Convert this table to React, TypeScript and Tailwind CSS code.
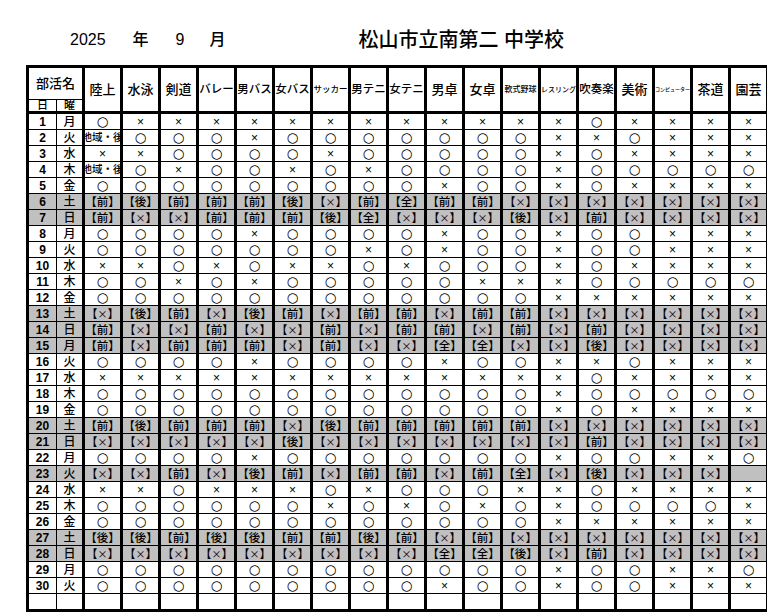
const clubs: { name: string; cls: string }[] = [
  { name: "陸上", cls: "text-[13px]" },
  { name: "水泳", cls: "text-[13px]" },
  { name: "剣道", cls: "text-[13px]" },
  { name: "バレー", cls: "text-[11.5px]" },
  { name: "男バス", cls: "text-[11.5px]" },
  { name: "女バス", cls: "text-[11.5px]" },
  { name: "サッカー", cls: "text-[8.5px]" },
  { name: "男テニ", cls: "text-[11.5px]" },
  { name: "女テニ", cls: "text-[11.5px]" },
  { name: "男卓", cls: "text-[13px]" },
  { name: "女卓", cls: "text-[13px]" },
  { name: "軟式野球", cls: "text-[8px]" },
  { name: "レスリング", cls: "text-[7px]" },
  { name: "吹奏楽", cls: "text-[11.5px]" },
  { name: "美術", cls: "text-[13px]" },
  { name: "コンピューター", cls: "text-[5px]" },
  { name: "茶道", cls: "text-[13px]" },
  { name: "園芸", cls: "text-[13px]" },
];

// o = ○, x = ×, X = 【×】, 前/後/全 = 【前】 etc, 地 = 地域・後, _ = empty
const rows: string[] = [
  "o x x x x x x x x x x x x o x x x x",
  "地 o o o x o o o o o o o x x o x x x",
  "x x o o o o x o o o o o x o x x x x",
  "地 o x o o x o x o o o o x o o o o o",
  "o o o o o o o o o x o o x o x x x x",
  "前 後 前 前 前 後 X 前 全 前 前 X X X X X X X",
  "前 X X 前 前 前 後 全 X X X 後 X 前 X X X X",
  "o o o o x o o o o x o o x o o x x x",
  "o o o o o o o x o x o o x o o x x x",
  "x x o x o x x o x o o o x o x x x x",
  "o o x o x o o o o o x x x o o o o o",
  "o o o o o o o o o o o o x x x x x x",
  "X 後 前 X 後 前 X 前 前 X 前 前 X X X X X X",
  "前 X X 前 X X 前 X 前 前 X 前 X 前 X X X X",
  "前 X 前 前 前 X 前 X X 全 全 X X 後 X X X X",
  "o o o o x o o o o x o o x x o x x x",
  "x x x x x x x x x x x x x o x x x x",
  "o o o o o o o o o o o o x o o o o o",
  "o o o o o o o o o o o o x o x x x x",
  "前 後 前 前 前 X 後 前 前 前 前 前 X X X X X X",
  "X X X X X 後 X X X X X X X 前 X X X X",
  "o o o o x o o o o o o o x o o x x o",
  "X X 前 X 後 前 X 前 前 X 前 全 X 後 X X X _",
  "x x o x x x o x o o o x x o x x x x",
  "o o o o o o x o x o x o x o o o o x",
  "o o o o o o o o o o o o x x x x x x",
  "後 後 前 後 後 前 前 後 前 X 前 X X X X X X X",
  "X X X X X X X X X 全 全 後 X 前 X X X X",
  "o o o o o o o o o o o o x o o x x o",
  "o o o o o o o o o x o o x o o x x x",
];

const weekdays = ["月", "火", "水", "木", "金", "土", "日"];
const cjk = { fontFamily: '"Noto Sans CJK JP", sans-serif' };
const dejavu = { fontFamily: '"DejaVu Sans", sans-serif' };

const Cell = ({ v }: { v: string }) => {
  if (v === "地")
    return (
      <div className="h-[15px] flex items-center justify-center overflow-hidden">
        <span className="text-[10.5px] leading-none font-medium whitespace-nowrap" style={cjk}>
          地域・後
        </span>
      </div>
    );
  let content: React.ReactNode = null;
  if (v === "o")
    content = (
      <span className="text-[13.5px] leading-none" style={dejavu}>
        ○
      </span>
    );
  else if (v === "x") content = <span className="text-[12px] leading-none">×</span>;
  else if (v === "X")
    content = (
      <span className="text-[11.5px] leading-none font-medium whitespace-nowrap" style={cjk}>
        【<span className="text-[10px] font-normal">×</span>】
      </span>
    );
  else if (v !== "_")
    content = (
      <span className="text-[11.5px] leading-none font-medium whitespace-nowrap" style={cjk}>
        【{v}】
      </span>
    );
  return <div className="h-[15px] flex items-center justify-center">{content}</div>;
};

export default function App() {
  return (
    <div
      className="w-[767px] h-[614px] overflow-hidden bg-white text-black"
      style={{ fontFamily: '"Liberation Sans", "Noto Sans CJK JP", sans-serif' }}
    >
      <div className="flex items-center h-[22px] mt-[29px] ml-[70px] font-medium">
        <span className="text-[16px]">2025</span>
        <span className="text-[16px] ml-[27px]">年</span>
        <span className="text-[16px] ml-[27px]">9</span>
        <span className="text-[16px] ml-[25px]">月</span>
        <span className="text-[20px] ml-[133px]">松山市立南第二 中学校</span>
      </div>

      <table className="mt-[14px] ml-[26px] w-[740px] table-fixed border-collapse border-[3px] border-black leading-none text-[11px]">
        <colgroup>
          <col className="w-[29px]" />
          <col className="w-[27px]" />
          {clubs.map((c) => (
            <col key={c.name} className="w-[38px]" />
          ))}
        </colgroup>
        <thead>
          <tr className="h-[33px]">
            <th colSpan={2} className="p-0 font-medium text-[13px] border-b border-r-[3px] border-black">
              部活名
            </th>
            {clubs.map((c) => (
              <th
                key={c.name}
                rowSpan={2}
                className={`p-0 font-medium whitespace-nowrap overflow-hidden border-x-[3px] border-b-[3px] border-black ${c.cls}`}
              >
                {c.name}
              </th>
            ))}
          </tr>
          <tr className="h-[13px]">
            <th className="p-0 font-medium text-[11px] border-r border-b-[3px] border-black">日</th>
            <th className="p-0 font-medium text-[11px] border-r-[3px] border-b-[3px] border-black">曜</th>
          </tr>
        </thead>
        <tbody>
          {rows.map((r, i) => {
            const cells = r.split(" ");
            const gray = cells[0] !== "o" && cells[0] !== "x" && cells[0] !== "地";
            return (
              <tr key={i} className={gray ? "bg-[#c0c0c0]" : "bg-white"}>
                <td className="p-0 border-r border-y border-black">
                  <div className="h-[15px] flex items-center justify-center text-[12px] font-bold">{i + 1}</div>
                </td>
                <td className="p-0 border-r-[3px] border-y border-black">
                  <div className="h-[15px] flex items-center justify-center text-[12px] font-medium">
                    {weekdays[i % 7]}
                  </div>
                </td>
                {cells.map((v, j) => (
                  <td key={j} className="p-0 border-x-[3px] border-y border-black">
                    <Cell v={v} />
                  </td>
                ))}
              </tr>
            );
          })}
          <tr>
            <td className="p-0 border-r border-y border-black">
              <div className="h-[15px]"></div>
            </td>
            <td className="p-0 border-r-[3px] border-y border-black">
              <div className="h-[15px]"></div>
            </td>
            {clubs.map((c) => (
              <td key={c.name} className="p-0 border-x-[3px] border-y border-black">
                <div className="h-[15px]"></div>
              </td>
            ))}
          </tr>
        </tbody>
      </table>
    </div>
  );
}
